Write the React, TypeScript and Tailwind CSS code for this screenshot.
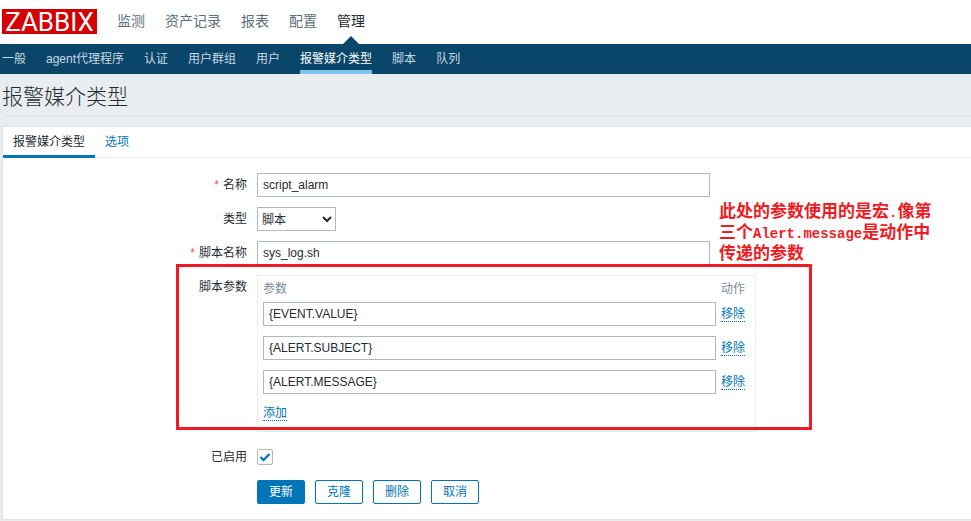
import { useState, type ReactNode } from "react";

const MAIN_NAV = ["监测", "资产记录", "报表", "配置", "管理"];
const SUB_NAV = ["一般", "agent代理程序", "认证", "用户群组", "用户", "报警媒介类型", "脚本", "队列"];
const INPUT =
  "block h-6 w-full max-w-[453px] border border-[#acbbc2] bg-white px-[5px] text-xs leading-[22px] text-[#1f2c33] outline-none";
const LINK = "border-b border-dotted border-[#0275b8] leading-[14px] text-[#0275b8]";
const OUTLINE_BUTTON = "h-6 w-12 rounded-xs border border-[#0275b8] bg-white text-[#0275b8]";

function Header() {
  return (
    <header>
      <div className="flex h-11 items-start gap-5 bg-white pl-[2px]">
        <a
          href="#"
          className="mt-[9px] h-[25px] w-[95px] bg-[#d40000] text-center font-[Roboto,sans-serif] text-[26px] leading-[26px] text-white"
        >
          ZABBIX
        </a>
        <nav className="flex h-11 gap-5 text-sm leading-[42px] text-[#5c6f7a]">
          {MAIN_NAV.map((item) =>
            item === "管理" ? (
              <a key={item} href="#" className="relative text-[#1f2c33]">
                {item}
                <span className="absolute bottom-0 left-1/2 -ml-2 border-x-8 border-b-8 border-x-transparent border-b-[#0a466a]" />
              </a>
            ) : (
              <a key={item} href="#">
                {item}
              </a>
            ),
          )}
        </nav>
      </div>
      <nav className="flex h-[30px] gap-5 bg-[#0a466a] pl-[2px] leading-[30px] text-[#c8d8e2]">
        {SUB_NAV.map((item) => (
          <a
            key={item}
            href="#"
            className={item === "报警媒介类型" ? "border-b-4 border-[#7ec4f2] text-white" : ""}
          >
            {item}
          </a>
        ))}
      </nav>
    </header>
  );
}

function Row({ label, htmlFor, required, children }: { label?: string; htmlFor?: string; required?: boolean; children: ReactNode }) {
  return (
    <div className="relative flex gap-[10px]">
      <div className="w-[244px] shrink-0 text-right leading-6">
        {required && <span className="mr-1 text-[#e45959]">*</span>}
        {label && <label htmlFor={htmlFor}>{label}</label>}
      </div>
      <div className="min-w-0 flex-1">{children}</div>
    </div>
  );
}

function Parameters() {
  const [params, setParams] = useState(["{EVENT.VALUE}", "{ALERT.SUBJECT}", "{ALERT.MESSAGE}"]);
  return (
    <div className="w-full max-w-[499px] border border-[#ebeef0] px-[5px] pb-[10px]">
      <table className="w-full table-fixed">
        <thead>
          <tr className="h-[26px] text-left text-[#768d99]">
            <th className="font-normal">参数</th>
            <th className="w-[34px] pl-[5px] font-normal">动作</th>
          </tr>
        </thead>
        <tbody>
          {params.map((value, i) => (
            <tr key={i} className="align-top">
              <td className="pb-[10px]">
                <input
                  aria-label={`参数 ${i + 1}`}
                  className={INPUT}
                  value={value}
                  onChange={(e) => setParams(params.map((p, n) => (n === i ? e.target.value : p)))}
                />
              </td>
              <td className="pt-1 pl-[5px]">
                <button type="button" className={LINK} onClick={() => setParams(params.filter((_, n) => n !== i))}>
                  移除
                </button>
              </td>
            </tr>
          ))}
        </tbody>
      </table>
      <div className="flex pt-[2px]">
        <button type="button" className={LINK} onClick={() => setParams([...params, ""])}>
          添加
        </button>
      </div>
    </div>
  );
}

export default function App() {
  const [enabled, setEnabled] = useState(true);
  return (
    <div className="min-h-screen bg-[#e9edf0] font-['Liberation_Sans','Noto_Sans_CJK_SC',sans-serif] text-xs text-[#1f2c33]">
      <Header />
      <main className="pb-px pl-[2px]">
        <h1 className="mb-[10px] h-[42px] border-b border-[#dfe4e7] text-[21px] leading-[46px] font-light">报警媒介类型</h1>
        <section className="border border-r-0 border-[#dfe4e7] bg-white">
          <div className="flex h-[31px] border-b border-[#ebeef0] leading-[30px]">
            <button type="button" className="h-[31px] border-b-3 border-[#0275b8] px-[10px]">
              报警媒介类型
            </button>
            <button type="button" className="h-[31px] border-b-3 border-transparent px-[10px] text-[#0275b8]">
              选项
            </button>
          </div>
          <form className="flex flex-col gap-[10px] py-[15px]" onSubmit={(e) => e.preventDefault()}>
            <Row label="名称" htmlFor="name" required>
              <input id="name" className={INPUT} defaultValue="script_alarm" />
            </Row>
            <Row label="类型" htmlFor="type">
              <select id="type" className="block h-6 w-[79px] border border-[#acbbc2] bg-white pt-[2px] text-xs">
                <option>脚本</option>
              </select>
              <p className="absolute top-[-5px] left-[716px] w-[220px] text-[17px] leading-5 font-bold text-[#ed1c24]">
                此处的参数使用的是宏
                <span className="font-['Liberation_Mono',monospace] text-sm">.</span>
                像第
                <br />
                三个
                <span className="font-['Liberation_Mono',monospace] text-sm">Alert.message</span>
                是动作中
                <br />
                传递的参数
              </p>
            </Row>
            <Row label="脚本名称" htmlFor="script" required>
              <input id="script" className={INPUT} defaultValue="sys_log.sh" />
            </Row>
            <Row label="脚本参数">
              <Parameters />
              <div className="pointer-events-none absolute top-[-11px] left-[173px] h-[166px] w-[636px] border-3 border-[#ed1c24]" />
            </Row>
            <div className="pt-[3px] pb-px">
              <Row label="已启用" htmlFor="enabled">
                <span className="relative mt-1 block size-4">
                  <input
                    id="enabled"
                    type="checkbox"
                    checked={enabled}
                    onChange={(e) => setEnabled(e.target.checked)}
                    className="block size-4 appearance-none rounded-xs border border-[#acbbc2] bg-white"
                  />
                  {enabled && (
                    <svg viewBox="0 0 16 16" className="pointer-events-none absolute inset-0 size-4">
                      <path d="M3.5 8l3 3 6-6" fill="none" stroke="#0275b8" strokeWidth="2.4" />
                    </svg>
                  )}
                </span>
              </Row>
            </div>
            <Row>
              <div className="flex gap-[10px]">
                <button type="submit" className="h-6 w-12 rounded-xs border border-[#0275b8] bg-[#0275b8] text-white">
                  更新
                </button>
                <button type="button" className={OUTLINE_BUTTON}>克隆</button>
                <button type="button" className={OUTLINE_BUTTON}>删除</button>
                <button type="button" className={OUTLINE_BUTTON}>取消</button>
              </div>
            </Row>
          </form>
        </section>
      </main>
    </div>
  );
}
